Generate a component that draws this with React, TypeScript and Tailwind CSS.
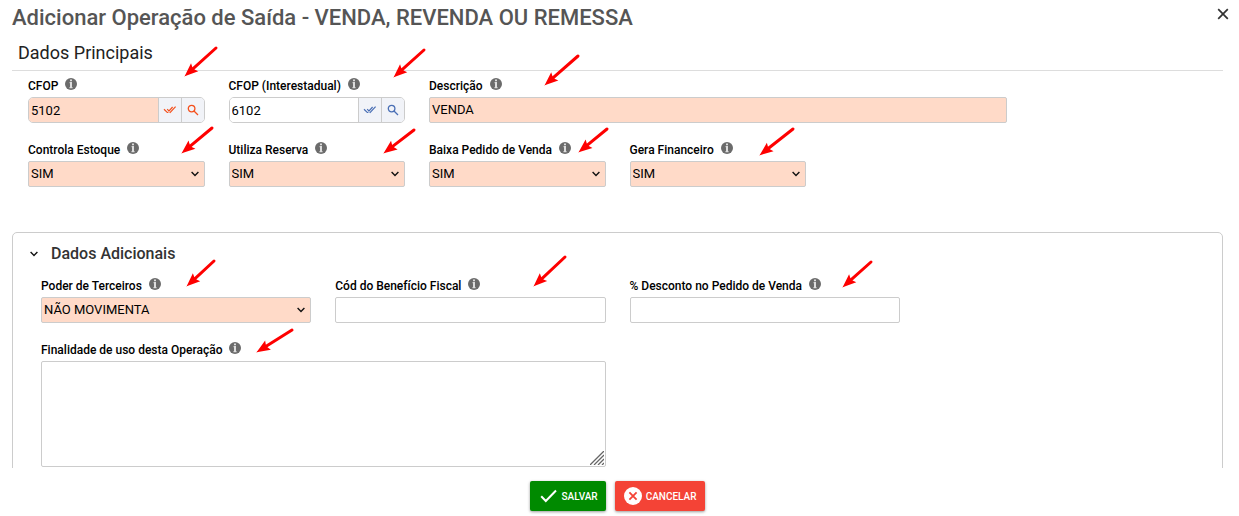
import { ReactNode } from 'react';
import clsx from 'clsx';

const controlClass =
  'block h-[26px] w-full appearance-none rounded-[2px] border border-[#ccc] pr-1 pb-px pl-[2px] text-[13px] text-black outline-none';

// start (tail) and end (tip) of every annotation arrow
const arrows = [
  { from: [216, 48], to: [185, 76] },
  { from: [424, 50], to: [394, 77] },
  { from: [578, 56], to: [545, 85] },
  { from: [212, 128], to: [182, 153] },
  { from: [414, 130], to: [384, 153] },
  { from: [607, 129], to: [579, 152] },
  { from: [793, 129], to: [760, 155] },
  { from: [214, 261], to: [187, 286] },
  { from: [565, 257], to: [534, 286] },
  { from: [871, 262], to: [843, 287] },
  { from: [292, 330], to: [257, 352] },
];

function Arrows() {
  return (
    <svg className="pointer-events-none absolute inset-0 h-full w-full" aria-hidden="true">
      <defs>
        <marker id="head" markerUnits="userSpaceOnUse" markerWidth="16" markerHeight="12" refX="14" refY="6" orient="auto">
          <path d="M14.5 6 L1 0.6 L2.6 4.4 L2.6 7.6 L1 11.4 Z" fill="#fe0000" stroke="none" />
        </marker>
      </defs>
      {arrows.map(({ from, to }) => {
        // the shaft stops inside the head so the tip stays sharp
        const length = Math.hypot(to[0] - from[0], to[1] - from[1]);
        const t = (length - 8) / length;
        const x = from[0] + (to[0] - from[0]) * t;
        const y = from[1] + (to[1] - from[1]) * t;
        return (
          <g key={`${to[0]}-${to[1]}`} stroke="#fe0000" strokeLinecap="round">
            <line x1={from[0]} y1={from[1]} x2={x} y2={y} strokeWidth="3" />
            <line x1={from[0]} y1={from[1]} x2={to[0]} y2={to[1]} strokeWidth="0.5" markerEnd="url(#head)" />
          </g>
        );
      })}
    </svg>
  );
}

function InfoIcon() {
  return (
    <svg viewBox="0 0 12 12" className="mb-1 h-3 w-3 shrink-0" aria-hidden="true">
      <circle cx="6" cy="6" r="6" fill="#6b6b6b" />
      <path d="M5 1.6h2v1.6H5zM4.6 4.1H7v5h.5v1.1H4.5V9.1H5V5.2h-.4z" fill="#ddd" />
    </svg>
  );
}

function Chevron({ className }: { className?: string }) {
  return (
    <svg viewBox="0 0 8 6" className={clsx('h-[6px] w-2', className)} fill="none" stroke="#111" strokeWidth="1.4" aria-hidden="true">
      <path d="M0.6 0.9 L4 4.4 L7.4 0.9" />
    </svg>
  );
}

type FieldProps = { id: string; label: string; className?: string; children: ReactNode };

function Field({ id, label, className, children }: FieldProps) {
  return (
    <div className={className}>
      <div className="flex h-5 items-center gap-[7px] pb-[2px]">
        <label htmlFor={id} className="whitespace-nowrap text-[12px] leading-5 font-medium text-black">
          {label}
        </label>
        <InfoIcon />
      </div>
      {children}
    </div>
  );
}

function SelectField({ id, label, value }: { id: string; label: string; value: string }) {
  return (
    <Field id={id} label={label}>
      <div className="relative">
        <select id={id} defaultValue={value} className={clsx(controlClass, 'bg-[#ffdac8]')}>
          <option>{value}</option>
        </select>
        <Chevron className="pointer-events-none absolute top-[10px] right-[6px]" />
      </div>
    </Field>
  );
}

function SearchField({ id, label, value, required }: { id: string; label: string; value: string; required?: boolean }) {
  const buttonClass = clsx(
    'flex w-[23px] shrink-0 items-center justify-center border-l border-[#ccc] bg-[#f1f3f8]',
    required ? 'text-[#f4511e]' : 'text-[#4a6fb5]'
  );
  return (
    <Field id={id} label={label}>
      <div className="flex h-[26px] overflow-hidden rounded-[5px] border border-[#ccc]">
        <input
          id={id}
          defaultValue={value}
          className={clsx('w-full min-w-0 pt-px pl-[2px] text-[13px] text-black outline-none', required ? 'bg-[#ffdac8]' : 'bg-white')}
        />
        <button type="button" aria-label="Validar" className={buttonClass}>
          <svg viewBox="0 0 14 10" className="h-[10px] w-[14px]" fill="none" stroke="currentColor" strokeWidth="1.2">
            <path d="M1 4.2 L4.5 7.6 M4.2 4.2 L7.2 7.4 L12.6 1.6 M4.5 7.6 L9.6 2" />
          </svg>
        </button>
        <button type="button" aria-label="Pesquisar" className={buttonClass}>
          <svg viewBox="0 0 12 12" className="h-3 w-3" fill="none" stroke="currentColor" strokeWidth="1.3">
            <circle cx="4.6" cy="4.6" r="3.3" />
            <path d="M7 7 L11 11" />
          </svg>
        </button>
      </div>
    </Field>
  );
}

export default function App() {
  return (
    <div className="relative flex h-screen flex-col overflow-hidden bg-white font-[Roboto,sans-serif]">
      <header className="flex h-[37px] shrink-0 items-start justify-between pr-[10px] pl-3">
        <h1 className="text-[22px] leading-9 font-medium text-[#555]">
          Adicionar Operação de Saída - VENDA, REVENDA OU REMESSA
        </h1>
        <button type="button" aria-label="Fechar" className="flex h-7 w-3 items-center justify-center">
          <svg viewBox="0 0 12 12" className="h-3 w-3" fill="none" stroke="#333" strokeWidth="1.7">
            <path d="M1.2 1.2 L10.8 10.8 M10.8 1.2 L1.2 10.8" />
          </svg>
        </button>
      </header>

      <main className="min-h-0 flex-1 overflow-hidden pr-4 pl-3">
        <h2 className="h-[34px] border-b border-[#ddd] px-[6px] text-[18px] leading-8 text-[#222]">Dados Principais</h2>

        <div className="grid grid-cols-6 gap-x-6 gap-y-[18px] px-4 pt-[6px]">
          <SearchField id="cfop" label="CFOP" value="5102" required />
          <SearchField id="cfop-inter" label="CFOP (Interestadual)" value="6102" />
          <Field id="descricao" label="Descrição" className="col-span-3">
            <input id="descricao" defaultValue="VENDA" className={clsx(controlClass, 'bg-[#ffdac8]')} />
          </Field>
          <div />
          <SelectField id="estoque" label="Controla Estoque" value="SIM" />
          <SelectField id="reserva" label="Utiliza Reserva" value="SIM" />
          <SelectField id="baixa" label="Baixa Pedido de Venda" value="SIM" />
          <SelectField id="financeiro" label="Gera Financeiro" value="SIM" />
        </div>

        <section className="mt-[45px] h-80 rounded-[5px] border border-[#ccc] px-7">
          <h2 className="-ml-3 h-11 text-[16px] font-medium text-[#333]">
            <button type="button" aria-expanded="true" className="flex h-[42px] items-center gap-[13px] pl-px">
              <Chevron />
              Dados Adicionais
            </button>
          </h2>
          <div className="grid grid-cols-4 gap-x-6 gap-y-[18px]">
            <SelectField id="poder" label="Poder de Terceiros" value="NÃO MOVIMENTA" />
            <Field id="beneficio" label="Cód do Benefício Fiscal">
              <input id="beneficio" className={controlClass} />
            </Field>
            <Field id="desconto" label="% Desconto no Pedido de Venda">
              <input id="desconto" className={controlClass} />
            </Field>
            <div />
            <Field id="finalidade" label="Finalidade de uso desta Operação" className="col-span-2">
              <div className="relative">
                <textarea
                  id="finalidade"
                  className="block h-[106px] w-full resize-none rounded-[2px] border border-[#ccc] p-1 text-[13px] outline-none"
                />
                <svg viewBox="0 0 14 14" className="pointer-events-none absolute right-[2px] bottom-[2px] h-[14px] w-[14px]" stroke="#666" strokeWidth="1.3" aria-hidden="true">
                  <path d="M0 14 L14 0 M4 14 L14 4 M8 14 L14 8 M12 14 L14 12" />
                </svg>
              </div>
            </Field>
          </div>
        </section>
      </main>

      <footer className="flex h-12 shrink-0 items-start justify-center gap-[9px] pt-[13px] pr-1 text-[10px] font-medium text-white">
        <button type="button" className="flex h-[30px] items-center gap-1 rounded-[2px] bg-[#008a00] pr-2 pl-[10px] shadow-[0_1px_3px_rgba(0,0,0,0.4)]">
          <svg viewBox="0 0 17 14" className="h-[14px] w-[17px]" fill="none" stroke="#fff" strokeWidth="2" aria-hidden="true">
            <path d="M1.2 7.2 L5.8 12 L16 1.5" />
          </svg>
          SALVAR
        </button>
        <button type="button" className="flex h-[30px] items-center gap-1 rounded-[2px] bg-[#f44336] pr-2 pl-[9px] shadow-[0_1px_3px_rgba(0,0,0,0.4)]">
          <svg viewBox="0 0 18 18" className="h-[18px] w-[18px]" aria-hidden="true">
            <circle cx="9" cy="9" r="9" fill="#fff" />
            <path d="M5.4 5.4 L12.6 12.6 M12.6 5.4 L5.4 12.6" stroke="#f44336" strokeWidth="1.8" />
          </svg>
          CANCELAR
        </button>
      </footer>

      <Arrows />
    </div>
  );
}
